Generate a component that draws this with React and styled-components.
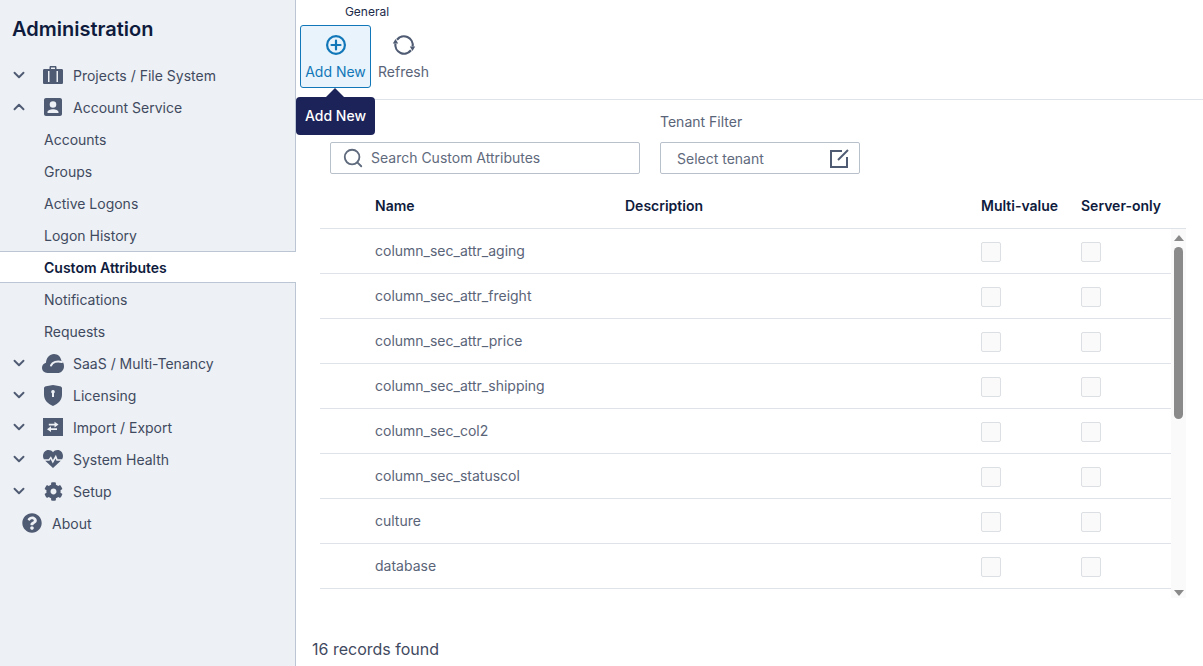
import React from 'react'
import styled, { createGlobalStyle } from 'styled-components'
import { FaCog, FaQuestionCircle } from 'react-icons/fa'
import { LuChevronDown, LuChevronUp, LuSearch } from 'react-icons/lu'

const GlobalStyle = createGlobalStyle`
    html, body {
        margin: 0;
        height: 100%;
        background: #fff;
        overflow: hidden;
    }
    body {
        font-family: Inter, "Noto Sans", sans-serif;
        color: #0f1b3d;
    }
`

const INK = '#4f5b73'
const SIDE_BG = '#edf0f4'

const Suitcase = () => (
    <svg width="20" height="18" viewBox="0 0 20 18" fill={INK}>
        <path fillRule="evenodd" d="M6.500 3V1.200C6.500.5 7 0 7.700 0h4.600c.7 0 1.200.5 1.200 1.200V3h5.200c.7 0 1.300.6 1.300 1.300v12.400c0 .7-.6 1.300-1.300 1.300H1.300C.6 18 0 17.400 0 16.700V4.300C0 3.600.6 3 1.300 3h5.200zM8 3h4V1.500H8V3zM5 5v11h1.500V5H5zm8.500 0v11H15V5h-1.500z" />
    </svg>
)

const Account = () => (
    <svg width="18" height="18" viewBox="0 0 18 18" fill={INK}>
        <path fillRule="evenodd" d="M2 0h14c1.100 0 2 .9 2 2v14c0 1.100-.9 2-2 2H2c-1.100 0-2-.9-2-2V2C0 .9.900 0 2 0zm7 3.200a3.300 3.300 0 1 0 0 6.600 3.300 3.300 0 0 0 0-6.600zM3.500 15h11v-1c0-1.700-2.800-2.800-5.500-2.800S3.500 12.300 3.500 14v1z" />
    </svg>
)

const Cloud = () => (
    <svg width="22" height="19" viewBox="0 0 22 19">
        <path fill={INK} d="M5.500 19C2.400 19 0 16.700 0 13.800c0-2.500 1.700-4.500 4-5.100C4.300 3.800 7.700 0 12 0c3.800 0 6.800 2.800 7.300 6.500 1.600 1.100 2.700 3.100 2.700 5.700 0 3.900-2.800 6.800-6.500 6.800h-10z" />
        <path fill="none" stroke={SIDE_BG} strokeWidth="2" strokeLinecap="round" d="M9 11.500C10.500 8 15 6.500 20 8" />
    </svg>
)

const Shield = () => (
    <svg width="18" height="21" viewBox="0 0 18 21" fill={INK}>
        <path fillRule="evenodd" d="M2 1.200 9 0l7 1.200c1.100.2 2 1 2 2.100v6.200c0 5.500-3.600 9.300-9 11.500C3.600 18.800 0 15 0 9.500V3.300c0-1.100.9-1.900 2-2.100zM9 5a1.800 1.800 0 0 0-1 3.300V12h2V8.300A1.800 1.800 0 0 0 9 5z" />
    </svg>
)

const Transfer = () => (
    <svg width="20" height="18" viewBox="0 0 20 18" fill={INK}>
        <path fillRule="evenodd" d="M0 0h20v18H0V0zm11.500 3.700v2H5.800v1.800h5.700v2l4-2.900-4-2.900zM8 8.300l-4 2.900 4 2.900v-2h6v-1.800H8v-2z" />
    </svg>
)

const Heart = () => (
    <svg width="20" height="18" viewBox="0 0 20 18" fill={INK}>
        <path d="M10 18 2.200 10.800h4.300l1-1.700 2.300 4.300 2.800-5 .9 2.400h4.300L10 18zM.9 9.200C.3 8.300 0 7.200 0 6 0 2.600 2.400 0 5.500 0 7.300 0 9 .9 10 2.300 11 .9 12.700 0 14.500 0 17.600 0 20 2.600 20 6c0 1.200-.3 2.300-.9 3.200h-4.500L12.900 4.800l-3 5.300-2-3.800-2.300 2.900H.9z" />
    </svg>
)

const AddCircle = () => (
    <svg width="20" height="20" viewBox="0 0 20 20" fill="none" stroke="#1277b8" strokeWidth="2.200" strokeLinecap="round">
        <circle cx="10" cy="10" r="8.900" />
        <path d="M10 5.500v9M5.500 10h9" />
    </svg>
)

const Refresh = () => (
    <svg width="22" height="22" viewBox="0 0 22 22">
        <path fill="none" stroke={INK} strokeWidth="2.200" d="M4 5.700A8.800 8.800 0 0 1 19.600 12.500M18 16.300A8.800 8.800 0 0 1 2.400 9.500" />
        <path fill={INK} d="M16.800 12.500h5.400L19.500 17zM-.2 9.500h5.400L2.500 5z" />
    </svg>
)

const EditBox = () => (
    <svg width="19" height="19" viewBox="0 0 19 19" fill="none" stroke={INK} strokeWidth="2">
        <path d="M12 2H1v16h16V8" />
        <path d="M8 11 18 1" />
    </svg>
)

const Sidebar = styled.aside`
    width: 296px;
    flex: none;
    height: 666px;
    box-sizing: border-box;
    background: ${SIDE_BG};
    border-right: 1px solid #bcc5d3;
`

const Title = styled.h1`
    margin: 0;
    height: 59px;
    padding: 18px 0 0 12px;
    box-sizing: border-box;
    font-size: 20px;
    line-height: 23px;
    font-weight: 600;
    color: #0f1b3d;
`

const NavRow = styled.div`
    display: flex;
    align-items: center;
    height: 32px;
    box-sizing: border-box;
    font-size: 14px;
    color: #3f4a60;
`

const Chevron = styled.span`
    width: 38px;
    padding-left: 10px;
    box-sizing: border-box;
    display: flex;
    color: ${INK};
`

const NavIcon = styled.span`
    width: 35px;
    padding-left: ${props => props.$pad || 0}px;
    box-sizing: border-box;
    display: flex;
    align-items: center;
    color: ${INK};
`

const SubRow = styled.div`
    display: flex;
    align-items: center;
    height: 32px;
    box-sizing: border-box;
    padding-left: 44px;
    font-size: 14px;
    color: #3f4a60;
`

const ActiveRow = styled(SubRow)`
    background: #fff;
    margin-right: -1px;
    position: relative;
    border-top: 1px solid #bcc5d3;
    border-bottom: 1px solid #bcc5d3;
    font-weight: 600;
    color: #0f1b3d;
`

const AboutRow = styled(NavRow)`
    padding-left: 22px;
    gap: 10px;
    color: #3f4a60;
`

const Main = styled.main`
    flex: 1;
    min-width: 0;
    position: relative;
    display: flex;
    flex-direction: column;
`

const Page = styled.div`
    display: flex;
    width: 1203px;
    height: 666px;
    overflow: hidden;
`

const Toolbar = styled.div`
    height: 100px;
    box-sizing: border-box;
    border-bottom: 1px solid #dfe3e9;
    padding: 5px 0 0 4px;
`

const GroupLabel = styled.div`
    width: 134px;
    text-align: center;
    font-size: 12px;
    line-height: 13px;
    color: #1c2a4a;
    margin-bottom: 7px;
`

const ToolButtons = styled.div`
    display: flex;
`

const ToolButton = styled.div`
    width: ${props => props.$width}px;
    height: 63px;
    box-sizing: border-box;
    display: flex;
    flex-direction: column;
    align-items: center;
    padding-top: ${props => props.$active ? 9 : 8}px;
    gap: ${props => props.$active ? 8 : 7}px;
    border: 1px solid ${props => props.$active ? '#1277b8' : 'transparent'};
    border-radius: 3px;
    background: ${props => props.$active ? '#e8f3fb' : 'transparent'};
    color: ${props => props.$active ? '#1277b8' : '#5a6478'};
    font-size: 14px;
    line-height: 17px;

    svg {
        overflow: visible;
    }
`

const Tooltip = styled.div`
    position: absolute;
    left: 0;
    top: 97px;
    width: 79px;
    height: 38px;
    padding-bottom: 2px;
    box-sizing: border-box;
    border-radius: 4px;
    background: #1c2359;
    color: #fff;
    font-size: 14px;
    font-weight: 500;
    display: flex;
    align-items: center;
    justify-content: center;

    &::before {
        content: '';
        position: absolute;
        left: 30px;
        top: -9px;
        border-left: 9px solid transparent;
        border-right: 9px solid transparent;
        border-bottom: 9px solid #1c2359;
    }
`

const Filters = styled.div`
    display: flex;
    gap: 20px;
    padding: 14px 0 0 34px;
    height: 74px;
    box-sizing: border-box;
`

const Field = styled.div`
    display: flex;
    flex-direction: column;
    justify-content: flex-end;
    gap: 12px;
`

const FieldLabel = styled.div`
    font-size: 14px;
    line-height: 16px;
    color: #5a6478;
`

const InputBox = styled.div`
    width: ${props => props.$width}px;
    height: 32px;
    box-sizing: border-box;
    border: 1px solid #b8c0cc;
    border-radius: 2px;
    display: flex;
    align-items: center;
    font-size: 14px;
    color: #5f6a7d;
`

const SearchBox = styled(InputBox)`
    padding: 0 0 1px 11px;
    gap: 7px;
`

const TenantBox = styled(InputBox)`
    padding: 0 10px 0 16px;
    justify-content: space-between;
`

const Table = styled.div`
    margin-left: 24px;
    width: 866px;
`

const Columns = styled.div`
    display: grid;
    grid-template-columns: 55px 250px 356px 100px 90px;
    align-items: center;
`

const HeadRow = styled(Columns)`
    height: 55px;
    padding-top: 8px;
    box-sizing: border-box;
    border-bottom: 1px solid #dfe3e9;
    font-size: 14px;
    font-weight: 600;
    color: #0f1b3d;
`

const BodyWrap = styled.div`
    display: flex;
    height: 369px;
`

const Rows = styled.div`
    width: 851px;
`

const Row = styled(Columns)`
    height: 45px;
    box-sizing: border-box;
    border-bottom: 1px solid #dfe3e9;
    font-size: 14px;
    color: #5a6478;
`

const NameCell = styled.span`
    padding-bottom: 2px;
`

const Check = styled.div`
    width: 20px;
    height: 20px;
    margin-top: 2px;
    box-sizing: border-box;
    border: 1px solid #dcdfe3;
    border-radius: 2px;
    background: #fafafa;
`

const ScrollTrack = styled.div`
    width: 15px;
    background: #fafafa;
    display: flex;
    flex-direction: column;
    align-items: center;
    padding: 6px 0 2px;
    box-sizing: border-box;
`

const ArrowUp = styled.div`
    border-left: 5px solid transparent;
    border-right: 5px solid transparent;
    border-bottom: 6px solid #8a8a8a;
`

const ArrowDown = styled.div`
    margin-top: auto;
    border-left: 5px solid transparent;
    border-right: 5px solid transparent;
    border-top: 6px solid #8a8a8a;
`

const Thumb = styled.div`
    width: 9px;
    height: 172px;
    margin-top: 6px;
    border-radius: 5px;
    background: #8a8a8a;
`

const Footer = styled.div`
    padding: 41px 0 0 16px;
    font-size: 16px;
    line-height: 20px;
    color: #3f4a60;
`

const rows = [
    'column_sec_attr_aging',
    'column_sec_attr_freight',
    'column_sec_attr_price',
    'column_sec_attr_shipping',
    'column_sec_col2',
    'column_sec_statuscol',
    'culture',
    'database',
]

const Group = ({ icon, label, open, pad }) => (
    <NavRow>
        <Chevron>{open ? <LuChevronUp size={18} strokeWidth={2.500} /> : <LuChevronDown size={18} strokeWidth={2.500} />}</Chevron>
        <NavIcon $pad={pad}>{icon}</NavIcon>
        {label}
    </NavRow>
)

export default function App() {
    return (
        <Page>
            <GlobalStyle />
            <Sidebar>
                <Title>Administration</Title>
                <Group icon={<Suitcase />} label="Projects / File System" pad={5} />
                <Group icon={<Account />} label="Account Service" pad={6} open />
                <SubRow>Accounts</SubRow>
                <SubRow>Groups</SubRow>
                <SubRow>Active Logons</SubRow>
                <SubRow>Logon History</SubRow>
                <ActiveRow>Custom Attributes</ActiveRow>
                <SubRow>Notifications</SubRow>
                <SubRow>Requests</SubRow>
                <Group icon={<Cloud />} label="SaaS / Multi-Tenancy" pad={4} />
                <Group icon={<Shield />} label="Licensing" pad={6} />
                <Group icon={<Transfer />} label="Import / Export" pad={5} />
                <Group icon={<Heart />} label="System Health" pad={5} />
                <Group icon={<FaCog size={19} />} label="Setup" pad={6} />
                <AboutRow><FaQuestionCircle size={20} color={INK} />About</AboutRow>
            </Sidebar>
            <Main>
                <Toolbar>
                    <GroupLabel>General</GroupLabel>
                    <ToolButtons>
                        <ToolButton $active $width={71}><AddCircle />Add New</ToolButton>
                        <ToolButton $width={65}><Refresh />Refresh</ToolButton>
                    </ToolButtons>
                </Toolbar>
                <Tooltip>Add New</Tooltip>
                <Filters>
                    <Field>
                        <SearchBox $width={310}><LuSearch size={22} />Search Custom Attributes</SearchBox>
                    </Field>
                    <Field>
                        <FieldLabel>Tenant Filter</FieldLabel>
                        <TenantBox $width={200}>Select tenant<EditBox /></TenantBox>
                    </Field>
                </Filters>
                <Table>
                    <HeadRow>
                        <span />
                        <span>Name</span>
                        <span>Description</span>
                        <span>Multi-value</span>
                        <span>Server-only</span>
                    </HeadRow>
                    <BodyWrap>
                        <Rows>
                            {rows.map(name => (
                                <Row key={name}>
                                    <span />
                                    <NameCell>{name}</NameCell>
                                    <span />
                                    <Check />
                                    <Check />
                                </Row>
                            ))}
                        </Rows>
                        <ScrollTrack>
                            <ArrowUp />
                            <Thumb />
                            <ArrowDown />
                        </ScrollTrack>
                    </BodyWrap>
                </Table>
                <Footer>16 records found</Footer>
            </Main>
        </Page>
    )
}
